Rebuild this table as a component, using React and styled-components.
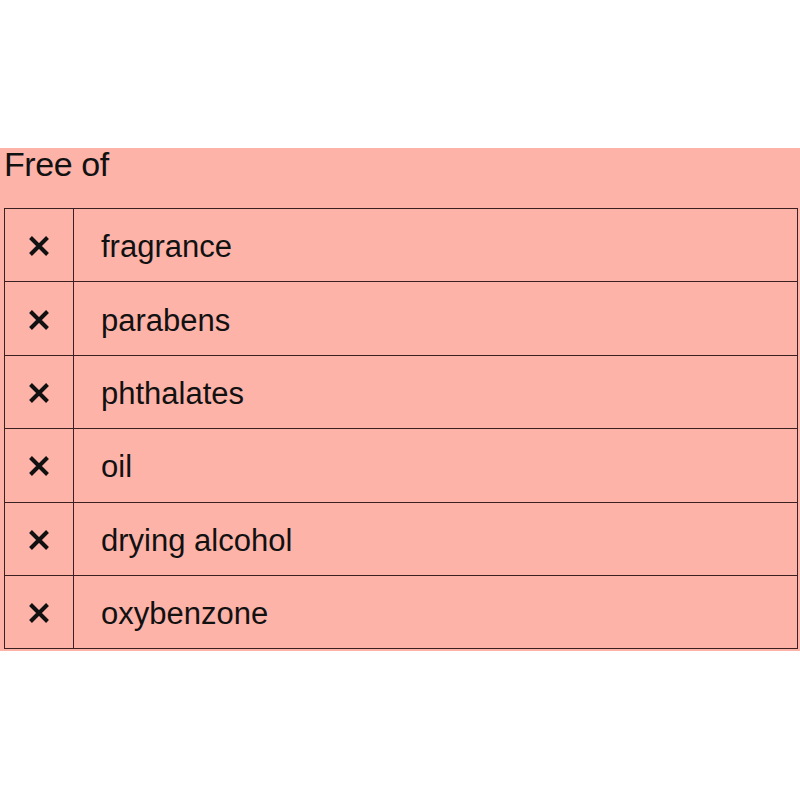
import React from "react"
import styled, { createGlobalStyle } from "styled-components"

const Global = createGlobalStyle`
  body {
    margin: 0;
    background: #fff;
    font-family: "Liberation Sans", Arial, sans-serif;
    color: #111;
  }
`

const Section = styled.section`
  margin-top: 148px;
  background: #feb3a9;
  padding: 0 2px 2px 4px;
`

const Heading = styled.h2`
  margin: 0 0 27px;
  font-size: 34px;
  font-weight: 400;
  line-height: 33px;
  letter-spacing: -0.4px;
`

const List = styled.table`
  width: 100%;
  border-collapse: collapse;
  border: 1px solid #3a2020;
`

const Row = styled.tr`
  height: 73.4px;
  border-bottom: 1px solid #3a2020;
`

const Mark = styled.td`
  width: 68px;
  padding: 2px 0 0;
  text-align: center;
  vertical-align: middle;
  border-right: 1px solid #3a2020;
  svg {
    display: block;
    margin: 0 auto;
  }
`

const Label = styled.td`
  padding: 4px 0 0 27px;
  font-size: 31px;
  vertical-align: middle;
`

const Cross = () => (
  <svg width="20" height="20" viewBox="0 0 20 20">
    <path d="M1.5 1.5 L18.5 18.5 M18.5 1.5 L1.5 18.5" stroke="#111" strokeWidth="4" strokeLinecap="butt" />
  </svg>
)

const items = ["fragrance", "parabens", "phthalates", "oil", "drying alcohol", "oxybenzone"]

export default () => (
  <>
    <Global />
    <Section>
      <Heading>Free of</Heading>
      <List>
        <tbody>
          {items.map((item) => (
            <Row key={item}>
              <Mark>
                <Cross />
              </Mark>
              <Label>{item}</Label>
            </Row>
          ))}
        </tbody>
      </List>
    </Section>
  </>
)
